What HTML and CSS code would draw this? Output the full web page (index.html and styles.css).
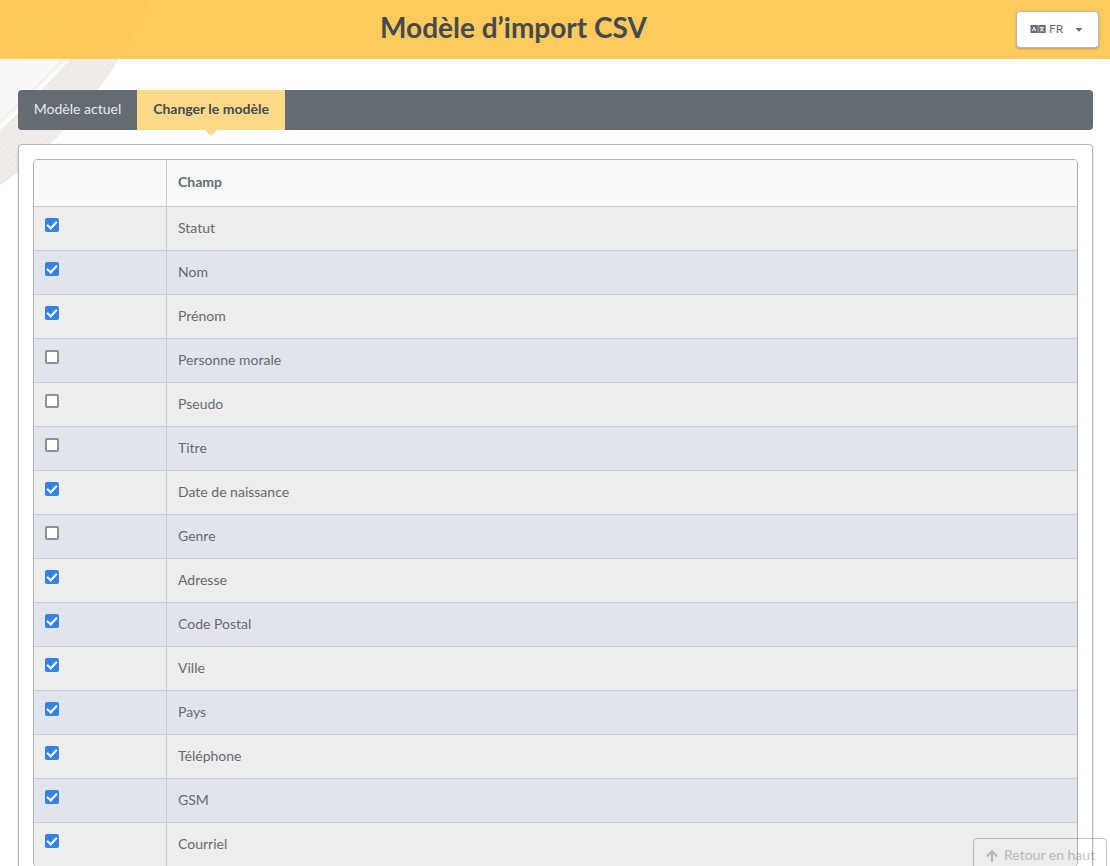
FILE: index.html
```html
<!DOCTYPE html>
<html lang="fr">
<head>
<meta charset="utf-8">
<title>Modèle d’import CSV</title>
<link rel="stylesheet" href="styles.css">
</head>
<body>
<svg class="backdrop" width="160" height="190" viewBox="0 0 160 190" aria-hidden="true">
  <defs>
    <pattern id="weave" width="5" height="5" patternUnits="userSpaceOnUse" patternTransform="rotate(-35)">
      <rect width="5" height="5" fill="#efece8"/>
      <rect width="2.5" height="2" fill="#ece8e3"/>
      <rect x="2.5" y="2.5" width="2.5" height="1.5" fill="#f1eeeb"/>
    </pattern>
    <linearGradient id="plate" x1="0" y1="0" x2="1" y2="1">
      <stop offset="0" stop-color="#f5f4f2"/>
      <stop offset="1" stop-color="#fbfaf9"/>
    </linearGradient>
  </defs>
  <path d="M0 0H150C135 36 120 59 98 90C82 112 65 130 50 144C34 160 18 173 0 185Z" fill="url(#weave)"/>
  <path d="M0 0H120C99 26 77 49 58 69C37 92 19 112 0 131Z" fill="url(#plate)"/>
  <path d="M113 0C83 39 43 83 0 121" fill="none" stroke="#f1efed" stroke-width="2"/>
  <path d="M119 0C92 36 45 87 0 128" fill="none" stroke="#fff" stroke-width="2"/>
  <path d="M0 19C43 15 82 9 107 0H0Z" fill="#eeebe8" opacity=".7"/>
  <path d="M0 42C18 40 30 49 26 64C21 82 12 96 0 108Z" fill="#f8f7f5"/>
</svg>
<header class="header">
  <h1 class="title">Modèle d’import CSV</h1>
  <button class="language" type="button">
    <svg class="language-icon" width="16" height="8" viewBox="0 0 16 8" aria-hidden="true">
      <rect x=".5" width="7.3" height="8" rx=".6" fill="#646b72"/>
      <rect x="8.3" width="7.4" height="8" rx=".6" fill="#646b72"/>
      <path d="M2.5 6L4.15 2L5.8 6M3.1 4.8H5.2M9.7 2.7H14.1M11.9 1.5V2.7M13.2 2.8Q12.4 5.2 10 6.3M10.5 3.4Q11.5 5.6 13.8 6.3" fill="none" stroke="#fff" stroke-width=".9"/>
    </svg>
    <span>FR</span>
    <svg class="caret" width="8" height="4" viewBox="0 0 8 4" aria-hidden="true"><path d="M.5 0H7.5L4 3.8Z" fill="#646b72"/></svg>
  </button>
</header>
<main class="content">
  <nav class="tabs">
    <a class="tab">Modèle actuel</a>
    <a class="tab active">Changer le modèle</a>
  </nav>
  <section class="panel">
    <div class="table">
      <div class="row head"><div class="cell check"></div><div class="cell">Champ</div></div>
      <div class="row"><div class="cell check"><span class="box on"></span></div><div class="cell">Statut</div></div>
      <div class="row"><div class="cell check"><span class="box on"></span></div><div class="cell">Nom</div></div>
      <div class="row"><div class="cell check"><span class="box on"></span></div><div class="cell">Prénom</div></div>
      <div class="row"><div class="cell check"><span class="box"></span></div><div class="cell">Personne morale</div></div>
      <div class="row"><div class="cell check"><span class="box"></span></div><div class="cell">Pseudo</div></div>
      <div class="row"><div class="cell check"><span class="box"></span></div><div class="cell">Titre</div></div>
      <div class="row"><div class="cell check"><span class="box on"></span></div><div class="cell">Date de naissance</div></div>
      <div class="row"><div class="cell check"><span class="box"></span></div><div class="cell">Genre</div></div>
      <div class="row"><div class="cell check"><span class="box on"></span></div><div class="cell">Adresse</div></div>
      <div class="row"><div class="cell check"><span class="box on"></span></div><div class="cell">Code Postal</div></div>
      <div class="row"><div class="cell check"><span class="box on"></span></div><div class="cell">Ville</div></div>
      <div class="row"><div class="cell check"><span class="box on"></span></div><div class="cell">Pays</div></div>
      <div class="row"><div class="cell check"><span class="box on"></span></div><div class="cell">Téléphone</div></div>
      <div class="row"><div class="cell check"><span class="box on"></span></div><div class="cell">GSM</div></div>
      <div class="row"><div class="cell check"><span class="box on"></span></div><div class="cell">Courriel</div></div>
    </div>
  </section>
</main>
<a class="to-top">
  <svg width="12" height="12" viewBox="0 0 12 12" aria-hidden="true"><path d="M6 12V1.8M.9 6.5L6 1.4L11.1 6.5" fill="none" stroke="#646b72" stroke-width="2.2"/></svg>
  <span>Retour en haut</span>
</a>
</body>
</html>
```
FILE: styles.css
```css
* { box-sizing: border-box; }
body {
  position: relative;
  margin: 0;
  height: 866px;
  overflow: hidden;
  background: #fff;
  color: #646b72;
  font: 14px/20px Lato, sans-serif;
}
.backdrop { position: absolute; top: 0; left: 0; z-index: -1; }
.header {
  display: grid;
  grid-template-columns: 1fr 83px;
  height: 59px;
  padding: 11px 11px 0 0;
  background: rgba(255, 195, 70, .88);
}
.title {
  margin: 0;
  padding-left: 11px;
  color: #434a50;
  font-size: 28px;
  font-weight: 700;
  line-height: 33px;
  text-align: center;
}
.language {
  display: flex;
  align-items: center;
  height: 37px;
  padding: 0 15px 1px 13px;
  border: 1px solid #b0b7bf;
  border-radius: 4px;
  background: #fff;
  box-shadow: 0 1px 2px rgba(80, 90, 100, .4);
  color: #646b72;
  font: 12px/16px Lato, sans-serif;
}
.language-icon { flex: none; margin-right: 3px; }
.caret {
  flex: none;
  margin: 1px 0 0 auto;
}
.content { padding: 31px 17px 0 18px; }
.tabs {
  display: flex;
  height: 40px;
  border-radius: 4px;
  background: #646b72;
}
.tab {
  width: 119px;
  padding: 9px 0;
  color: #e8e9ea;
  text-align: center;
}
.tab.active {
  position: relative;
  width: 148px;
  background: #ffd98a;
  color: #434a50;
  font-weight: 700;
}
.tab.active::after {
  content: "";
  position: absolute;
  top: 40px;
  left: 68px;
  border: 6px solid transparent;
  border-top-color: #ffd98a;
  border-bottom: 0;
}
.panel {
  height: 760px;
  margin-top: 14px;
  padding: 14px;
  border: 1px solid #afb6ba;
  border-radius: 4px;
  background: #fff;
  box-shadow: 0 1px 2px rgba(90, 105, 115, .4);
}
.table {
  overflow: hidden;
  border: 1px solid #afb3b8;
  border-radius: 4px;
}
.row {
  display: grid;
  grid-template-columns: 133px 1fr;
  height: 44px;
  border-top: 1px solid #c9ccd1;
  background: #ededed;
}
.row:nth-child(odd) { background: #e1e4ed; }
.row.head {
  height: 46px;
  border-top: 0;
  background: #f9fafc;
  font-weight: 700;
}
.cell { padding: 11px; }
.head .cell { padding-top: 12px; }
.cell.check { border-right: 1px solid #c9ccd1; }
.box {
  display: block;
  width: 14px;
  height: 14px;
  border: 2px solid #8f8f9d;
  border-radius: 2px;
  background: #fff;
}
.box.on { border-color: #3584e4; background: #3584e4; }
.box.on::after {
  content: "";
  display: block;
  box-sizing: border-box;
  width: 10px;
  height: 6px;
  margin-top: 1px;
  border: solid #fff;
  border-width: 0 0 2px 2px;
  transform: rotate(-47deg);
}
.to-top {
  position: absolute;
  top: 838px;
  left: 973px;
  display: flex;
  gap: 6px;
  width: 134px;
  height: 38px;
  padding: 6px 11px 0 12px;
  border: 1px solid #646b72;
  border-radius: 4px;
  opacity: .4;
  white-space: nowrap;
}
.to-top svg { flex: none; margin-top: 5px; }
```
